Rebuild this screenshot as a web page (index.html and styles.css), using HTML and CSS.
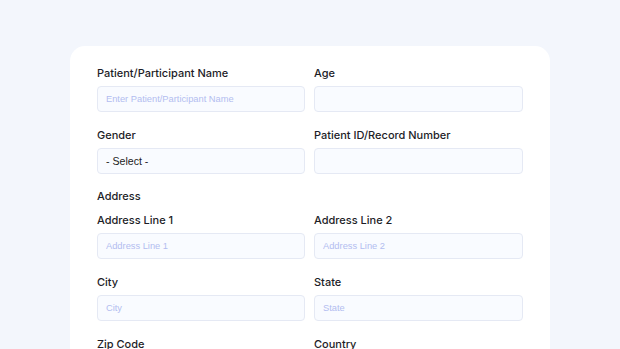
FILE: index.html
```html
<!DOCTYPE html>
<html lang="en">
<head>
    <meta charset="UTF-8">
    <meta name="viewport" content="width=device-width, initial-scale=1.0">
    <title>Patient Form</title>
    <link rel="stylesheet" href="styles.css">
</head>
<body>

    <div class="form-card">
        <!-- Datos del paciente -->
        <div class="form-grid">
            <div class="field">
                <label>Patient/Participant Name</label>
                <input type="text" placeholder="Enter Patient/Participant Name">
            </div>
            <div class="field">
                <label>Age</label>
                <input type="text">
            </div>
            <div class="field">
                <label>Gender</label>
                <div class="select-box">- Select -</div>
            </div>
            <div class="field">
                <label>Patient ID/Record Number</label>
                <input type="text">
            </div>
        </div>

        <!-- Dirección -->
        <h3 class="section-title">Address</h3>
        <div class="form-grid">
            <div class="field">
                <label>Address Line 1</label>
                <input type="text" placeholder="Address Line 1">
            </div>
            <div class="field">
                <label>Address Line 2</label>
                <input type="text" placeholder="Address Line 2">
            </div>
            <div class="field">
                <label>City</label>
                <input type="text" placeholder="City">
            </div>
            <div class="field">
                <label>State</label>
                <input type="text" placeholder="State">
            </div>
            <div class="field">
                <label>Zip Code</label>
                <input type="text" placeholder="Zip Code">
            </div>
            <div class="field">
                <label>Country</label>
                <input type="text" placeholder="Country">
            </div>
        </div>
    </div>

</body>
</html>
```

FILE: styles.css
```css
/* Fondo general */
body {
    margin: 0;
    font-family: 'Inter', sans-serif;
    background: #f3f6fc;
    color: #1d1d27;
    height: 349px;
    overflow: hidden;
}

.form-card {
    width: 426px;
    margin: 46px auto 0;
    padding: 20px 27px;
    background: #ffffff;
    border-radius: 15px;
}

/* Cuadrícula de campos */
.form-grid {
    display: grid;
    grid-template-columns: 208px 209px;
    column-gap: 9px;
    row-gap: 16px;
}

.field {
    display: flex;
    flex-direction: column;
    gap: 6px;
}

.field label,
.section-title {
    font-size: 11px;
    font-weight: 500;
    line-height: 14px;
}

.section-title {
    margin: 15px 0 10px;
}

.field input,
.select-box {
    box-sizing: border-box;
    height: 26px;
    padding: 0 8px;
    border: 1px solid #e5e9f4;
    border-radius: 4px;
    background: #f9fbff;
    font-family: 'Liberation Sans', Arial, sans-serif;
    font-size: 9.3px;
    color: #1d1d27;
    outline: none;
}

.field input::placeholder {
    color: #b3bdf0;
}

.select-box {
    display: flex;
    align-items: center;
    font-size: 10.6px;
    color: #222;
}
```
